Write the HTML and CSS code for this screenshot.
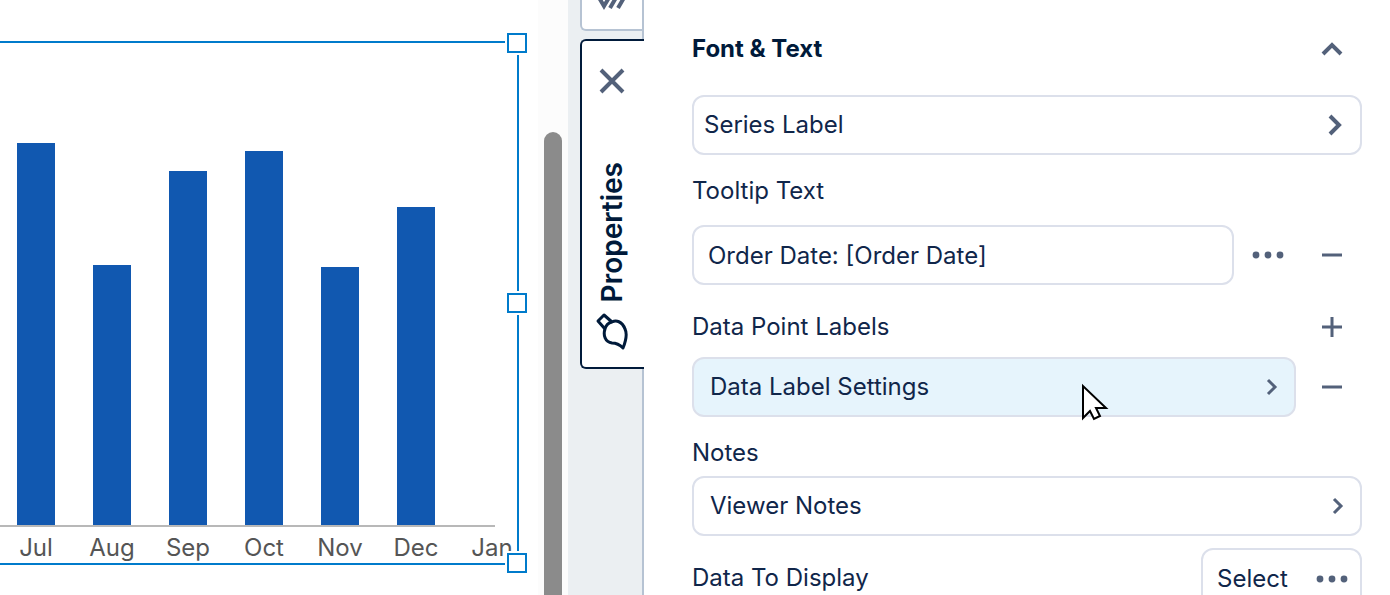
FILE: index.html
```html
<!DOCTYPE html>
<html lang="en">
<head>
  <meta charset="UTF-8" />
  <title>Chart Properties</title>
  <meta name="viewport" content="width=device-width, initial-scale=1.0">
  <link rel="stylesheet" href="styles.css">
</head>
<body>
  <div class="editor">
    <main class="canvas">
      <div class="plot">
        <div class="bar" style="height: 382px"></div>
        <div class="bar" style="height: 260px"></div>
        <div class="bar" style="height: 354px"></div>
        <div class="bar" style="height: 374px"></div>
        <div class="bar" style="height: 258px"></div>
        <div class="bar" style="height: 318px"></div>
      </div>
      <div class="months">
        <span>Jul</span>
        <span>Aug</span>
        <span>Sep</span>
        <span>Oct</span>
        <span>Nov</span>
        <span>Dec</span>
        <span>Jan</span>
      </div>
      <div class="selection">
        <span class="handle top"></span>
        <span class="handle middle"></span>
        <span class="handle bottom"></span>
      </div>
    </main>

    <div class="scrollbar"><div class="thumb"></div></div>

    <nav class="rail">
      <button type="button" class="tab" aria-label="Filters">
        <svg width="32" height="12" viewBox="0 0 32 12" fill="none" stroke="currentColor" stroke-width="4">
          <path d="M2 -4 L8 6 L14 -4 M14 8 L21 -4 M22 8 L29 -4" />
        </svg>
      </button>
      <div class="tab-active">
        <button type="button" class="close" aria-label="Close">
          <svg width="28" height="28" viewBox="0 0 28 28" fill="none" stroke="currentColor" stroke-width="4">
            <path d="M3 3 L25 25 M25 3 L3 25" />
          </svg>
        </button>
        <button type="button" class="properties">
          <span>Properties</span>
          <svg width="34" height="38" viewBox="0 0 34 38" fill="none" stroke="currentColor" stroke-width="3" stroke-linejoin="round">
            <path d="M10 17 L3 9 L9 3 L17 10" />
            <path d="M10 17 C8 23 10 30 17 31 C22 31 25 33 28 36 C30 31 33 23 30 17 C27 9 21 8 17 10 C13 11 11 13 10 17 Z" />
          </svg>
        </button>
      </div>
    </nav>

    <form class="panel">
      <div class="row heading">
        <h2>Font &amp; Text</h2>
        <button type="button" class="icon-btn" aria-label="Collapse">
          <svg class="thick" width="24" height="24" viewBox="0 0 24 24"><path d="M3 17 L12 8 L21 17" /></svg>
        </button>
      </div>

      <button type="button" class="field series">
        Series Label
        <svg class="thick" width="24" height="24" viewBox="0 0 24 24"><path d="M8 3 L17 12 L8 21" /></svg>
      </button>

      <label class="label tooltip-label" for="tooltip">Tooltip Text</label>
      <div class="row">
        <input type="text" class="field" id="tooltip" value="Order Date: [Order Date]">
        <button type="button" class="icon-btn" aria-label="More">
          <svg class="dots" width="32" height="8" viewBox="0 0 32 8"><circle cx="4" cy="4" r="3.4" /><circle cx="16" cy="4" r="3.4" /><circle cx="28" cy="4" r="3.4" /></svg>
        </button>
        <button type="button" class="icon-btn" aria-label="Remove tooltip">
          <svg width="20" height="20" viewBox="0 0 20 20"><path d="M0 10 H20" /></svg>
        </button>
      </div>

      <div class="row points">
        <span class="label">Data Point Labels</span>
        <button type="button" class="icon-btn" aria-label="Add data label">
          <svg width="20" height="20" viewBox="0 0 20 20"><path d="M0 10 H20 M10 0 V20" /></svg>
        </button>
      </div>
      <div class="row settings">
        <button type="button" class="field hovered">
          Data Label Settings
          <svg width="20" height="20" viewBox="0 0 20 20"><path d="M6 3 L13 10 L6 17" /></svg>
          <svg class="cursor" width="28" height="40" viewBox="0 0 28 40"><path d="M2 3 V35 L9 28 L13 36 L19 33 L15 25 H25 Z" /></svg>
        </button>
        <button type="button" class="icon-btn" aria-label="Remove data label">
          <svg width="20" height="20" viewBox="0 0 20 20"><path d="M0 10 H20" /></svg>
        </button>
      </div>

      <span class="label notes-label">Notes</span>
      <button type="button" class="field">
        Viewer Notes
        <svg width="20" height="20" viewBox="0 0 20 20"><path d="M6 3 L13 10 L6 17" /></svg>
      </button>

      <div class="row display">
        <span class="label">Data To Display</span>
        <button type="button" class="field select">
          Select
          <svg class="dots" width="32" height="8" viewBox="0 0 32 8"><circle cx="4" cy="4" r="3.4" /><circle cx="16" cy="4" r="3.4" /><circle cx="28" cy="4" r="3.4" /></svg>
        </button>
      </div>
    </form>
  </div>
</body>
</html>
```
FILE: styles.css
```css
* {
  box-sizing: border-box;
}
body {
  margin: 0;
  font-family: Inter, sans-serif;
  font-size: 24px;
  color: #10264a;
  background: white;
  overflow: hidden;
}
button, input {
  font: inherit;
  color: inherit;
  margin: 0;
  padding: 0;
  border: none;
  background: none;
}
button {
  cursor: pointer;
}
svg {
  display: block;
  flex: none;
}
.editor {
  display: grid;
  grid-template-columns: minmax(0, 538fr) 30px 74px minmax(0, 748fr);
  height: 100vh;
}

/* chart */
.canvas {
  position: relative;
  padding-top: 43px;
}
.plot {
  display: flex;
  align-items: flex-end;
  height: 484px;
  margin: 0 43px 0 -2px;
  padding-right: 41px;
  border-bottom: 2px solid #b8b8b8;
}
.bar {
  flex: 1;
  margin: 0 19px;
  background: #1158b0;
}
.months {
  display: flex;
  margin: 0 8px 0 -2px;
  line-height: 42px;
  color: #555;
}
.months span {
  flex: 1;
  text-align: center;
}
.selection {
  position: absolute;
  top: 41px;
  left: -2px;
  right: 19px;
  height: 524px;
  border: 2px solid #007bcb;
}
.handle {
  position: absolute;
  right: -10px;
  width: 20px;
  height: 20px;
  border: 2px solid #007bcb;
  background: white;
  box-shadow: 0 0 0 2px white;
}
.top {
  top: -10px;
}
.middle {
  top: 250px;
}
.bottom {
  bottom: -10px;
}
.scrollbar {
  padding: 132px 6px 0;
  background: #fcfcfc;
}
.thumb {
  height: 100%;
  border-radius: 9px 9px 0 0;
  background: #8b8b8b;
}

/* side tabs */
.rail {
  display: flex;
  flex-direction: column;
  gap: 8px;
  padding-left: 12px;
  background: #ebeff2;
}
.tab {
  display: flex;
  align-items: flex-start;
  height: 31px;
  padding-left: 14px;
  border: 2px solid #b6c3d3;
  border-width: 0 0 2px 2px;
  border-radius: 0 0 0 6px;
  background: white;
  color: #53617a;
}
.tab-active {
  position: relative;
  display: flex;
  flex-direction: column;
  align-items: center;
  height: 330px;
  margin-right: -2px;
  padding: 26px 2px 0 0;
  border: 2px solid #001a3a;
  border-right: none;
  border-radius: 6px 0 0 6px;
  background: white;
}
.close {
  color: #53617a;
}
.properties {
  display: flex;
  flex-direction: column;
  align-items: center;
  gap: 10px;
  margin-top: 67px;
  font-size: 28px;
  font-weight: 600;
  line-height: 32px;
  color: #001a3a;
}
.properties span {
  writing-mode: vertical-rl;
  transform: rotate(180deg);
}

/* properties panel */
.panel {
  display: flex;
  flex-direction: column;
  padding: 19px 28px 0 48px;
  border-left: 2px solid #b6c3d3;
  line-height: 40px;
}
.row {
  display: flex;
  align-items: center;
  gap: 4px;
}
.heading {
  justify-content: space-between;
  margin-bottom: 16px;
}
h2 {
  margin: 0;
  font-size: 24px;
  font-weight: 700;
  color: #001a3a;
}
.field {
  display: flex;
  align-items: center;
  justify-content: space-between;
  flex: none;
  height: 60px;
  padding: 0 12px 0 16px;
  border: 2px solid #dce0eb;
  border-radius: 12px;
  background: white;
  text-align: left;
}
.series {
  padding: 0 14px 0 10px;
}
.row .field {
  flex: 1;
  min-width: 0;
}
input.field {
  padding-left: 14px;
}
.icon-btn {
  display: flex;
  align-items: center;
  justify-content: center;
  flex: none;
  width: 60px;
  height: 60px;
}
.panel svg {
  fill: none;
  stroke: #53617a;
  stroke-width: 3;
}
.panel .thick {
  stroke-width: 4;
}
.panel .dots {
  fill: #53617a;
  stroke: none;
}
.tooltip-label {
  margin: 16px 0 14px;
}
.points {
  justify-content: space-between;
  margin-top: 12px;
}
.settings {
  gap: 6px;
}
.row .hovered {
  position: relative;
  background: #e6f4fc;
}
.panel .cursor {
  position: absolute;
  top: 24px;
  right: 185px;
  fill: white;
  stroke: black;
  stroke-width: 2;
}
.notes-label {
  margin: 16px 0 3px;
}
.display {
  justify-content: space-between;
  margin-top: 12px;
}
.row .select {
  flex: 0 0 161px;
  padding: 2px 12px 0 14px;
}
```
